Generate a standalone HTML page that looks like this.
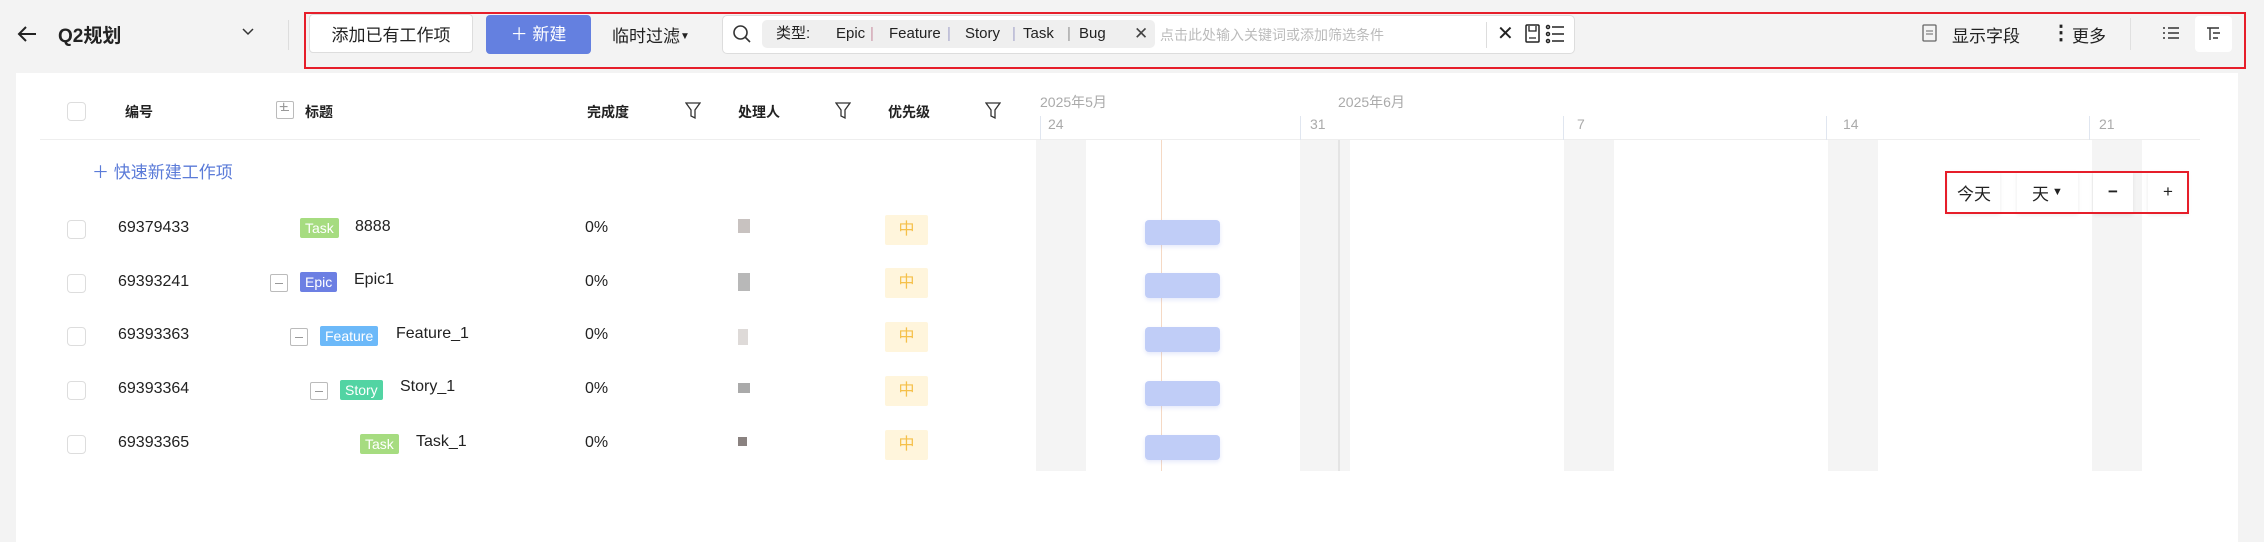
<!DOCTYPE html>
<html><head><meta charset="utf-8"><style>
*{box-sizing:border-box;margin:0;padding:0}
body{width:2264px;height:542px;background:#f3f3f3;font-family:"Liberation Sans","Noto Sans CJK SC",sans-serif;color:#222;position:relative;overflow:hidden;font-size:16px}
.a{position:absolute}
.red{position:absolute;border:2px solid #e61e2a}
.btn{position:absolute;background:#fff;border:1px solid #ddd;border-radius:4px;display:flex;align-items:center;justify-content:center}
.cb{position:absolute;width:19px;height:19px;border:1px solid #ddd;border-radius:4px;background:#fff}
.hd{position:absolute;top:102px;font-size:14px;font-weight:bold;color:#222}
.tag{position:absolute;height:20px;border-radius:2px;color:#fff;font-size:14px;line-height:20px;padding:0 5px}
.mb{position:absolute;width:18px;height:18px;border:1px solid #bbb;border-radius:2px;background:#fff}
.mb:after{content:"";position:absolute;left:4px;top:8px;width:8px;height:1px;background:#999}
.pr{position:absolute;left:885px;width:43px;height:30px;background:#fff5dc;color:#f5c04a;font-size:16px;line-height:30px;text-align:center;border-radius:2px}
.bar{position:absolute;left:1145px;width:75px;height:25px;background:#c0cdf7;border-radius:4px;box-shadow:0 2px 4px rgba(120,140,230,.2)}
.wk{position:absolute;top:140px;height:331px;background:#f4f4f4}
.tl{position:absolute;top:116px;height:24px;width:1px;background:#e0e6f0}
.dt{position:absolute;font-size:14px;color:#aaa}
.tb{position:absolute;top:171px;height:42px;background:#fff;box-shadow:0 2px 4px rgba(0,0,0,.08);display:flex;align-items:center;justify-content:center;font-size:17px}
</style></head><body>
<!-- header -->
<svg class="a" style="left:16px;top:24px" width="22" height="20" viewBox="0 0 22 20"><path d="M20 10H3M10 3L3 10l7 7" stroke="#222" stroke-width="2" fill="none"/></svg>
<div class="a" style="left:58px;top:21px;font-size:19px;font-weight:bold">Q2规划</div>
<svg class="a" style="left:242px;top:28px" width="12" height="8"><path d="M1 1l5 5 5-5" stroke="#333" stroke-width="1.5" fill="none"/></svg>
<div class="a" style="left:288px;top:20px;width:1px;height:30px;background:#ddd"></div>
<div class="btn" style="left:309px;top:14px;width:164px;height:39px;font-size:17px">添加已有工作项</div>
<div class="a" style="left:486px;top:15px;width:105px;height:39px;background:#6480e0;border-radius:4px;color:#fff;font-size:17px;line-height:39px;text-align:center">＋ 新建</div>
<div class="a" style="left:612px;top:22px;font-size:17px">临时过滤<span style="font-size:10px;vertical-align:3px">▼</span></div>
<div class="a" style="left:722px;top:15px;width:853px;height:39px;background:#fff;border:1px solid #ddd;border-radius:5px"></div>
<svg class="a" style="left:732px;top:24px" width="20" height="20"><circle cx="8.5" cy="8.5" r="6.5" stroke="#333" stroke-width="1.6" fill="none"/><path d="M13 13l5 5" stroke="#333" stroke-width="1.6"/></svg>
<div class="a" style="left:762px;top:20px;width:393px;height:28px;background:#efefef;border-radius:5px;font-size:15px;line-height:28px;white-space:nowrap">
<span class="a" style="left:14px">类型:</span><span class="a" style="left:74px">Epic</span><span class="a" style="left:108px;color:#c9a">|</span><span class="a" style="left:127px">Feature</span><span class="a" style="left:185px;color:#aac">|</span><span class="a" style="left:203px">Story</span><span class="a" style="left:250px;color:#aac">|</span><span class="a" style="left:261px">Task</span><span class="a" style="left:305px;color:#999">|</span><span class="a" style="left:317px">Bug</span><span class="a" style="left:372px;color:#444;font-size:17px">✕</span></div>
<div class="a" style="left:1160px;top:25px;font-size:14px;color:#bbb">点击此处输入关键词或添加筛选条件</div>
<div class="a" style="left:1486px;top:22px;width:1px;height:26px;background:#ddd"></div>
<div class="a" style="left:1497px;top:21px;font-size:20px;color:#222">✕</div>
<svg class="a" style="left:1525px;top:24px" width="16" height="20"><rect x="1" y="1" width="13" height="17" rx="1" stroke="#222" fill="none" stroke-width="1.5"/><path d="M4 2v5h7V2M4 14h7" stroke="#222" stroke-width="1.3" fill="none"/></svg>
<svg class="a" style="left:1545px;top:24px" width="20" height="20"><g stroke="#222" stroke-width="1.5" fill="none"><circle cx="3" cy="3" r="1.5"/><circle cx="3" cy="10" r="1.5"/><circle cx="3" cy="17" r="1.5"/><path d="M7 3h12M7 10h12M7 17h12"/></g></svg>
<svg class="a" style="left:1922px;top:24px" width="16" height="18"><rect x="1" y="1" width="13" height="16" rx="1" stroke="#666" fill="none" stroke-width="1.3"/><path d="M4 7h7M4 10h7" stroke="#666"/></svg>
<div class="a" style="left:1952px;top:22px;font-size:17px">显示字段</div>
<div class="a" style="left:2051px;top:20px;font-size:20px;font-weight:bold">⋮</div>
<div class="a" style="left:2072px;top:22px;font-size:17px">更多</div>
<div class="a" style="left:2130px;top:18px;width:1px;height:32px;background:#e0e0e0"></div>
<svg class="a" style="left:2163px;top:26px" width="16" height="14"><g stroke="#333" stroke-width="1.4"><path d="M0 2h2M0 7h2M0 12h2M5 2h11M5 7h11M5 12h11"/></g></svg>
<div class="a" style="left:2195px;top:16px;width:37px;height:36px;background:#fff;border-radius:4px"></div>
<svg class="a" style="left:2206px;top:26px" width="16" height="16"><g stroke="#333" stroke-width="1.4" fill="none"><path d="M1 2h12M4 2v12M7 7h7M7 12h5"/></g></svg>
<div class="red" style="left:304px;top:12px;width:1942px;height:57px"></div>
<!-- panel -->
<div class="a" style="left:16px;top:73px;width:2222px;height:469px;background:#fff"></div>
<div class="cb" style="left:67px;top:102px"></div>
<div class="hd" style="left:125px">编号</div>
<div class="mb" style="left:276px;top:101px"></div><div class="a" style="left:279px;top:99px;font-size:16px;color:#999">+</div>
<div class="hd" style="left:305px">标题</div>
<div class="hd" style="left:587px">完成度</div>
<div class="hd" style="left:738px">处理人</div>
<div class="hd" style="left:888px">优先级</div>
<svg class="a" style="left:685px;top:102px" width="16" height="18"><path d="M1 1h14l-5 7v8l-4-2V8z" stroke="#333" fill="none" stroke-width="1.3"/></svg>
<svg class="a" style="left:835px;top:102px" width="16" height="18"><path d="M1 1h14l-5 7v8l-4-2V8z" stroke="#333" fill="none" stroke-width="1.3"/></svg>
<svg class="a" style="left:985px;top:102px" width="16" height="18"><path d="M1 1h14l-5 7v8l-4-2V8z" stroke="#333" fill="none" stroke-width="1.3"/></svg>
<div class="a" style="left:40px;top:139px;width:2160px;height:1px;background:#eee"></div>
<!-- gantt -->
<div class="wk" style="left:1036px;width:50px"></div>
<div class="wk" style="left:1300px;width:50px"></div>
<div class="a" style="left:1338px;top:140px;width:2px;height:331px;background:#e4e4e4"></div>
<div class="wk" style="left:1564px;width:50px"></div>
<div class="wk" style="left:1828px;width:50px"></div>
<div class="wk" style="left:2092px;width:50px"></div>
<div class="a" style="left:1161px;top:140px;width:1px;height:331px;background:#f5d9c4"></div>
<div class="dt" style="left:1040px;top:92px">2025年5月</div>
<div class="dt" style="left:1338px;top:92px">2025年6月</div>
<div class="tl" style="left:1040px"></div><div class="dt" style="left:1048px;top:116px">24</div>
<div class="tl" style="left:1300px"></div><div class="dt" style="left:1310px;top:116px">31</div>
<div class="tl" style="left:1563px"></div><div class="dt" style="left:1577px;top:116px">7</div>
<div class="tl" style="left:1826px"></div><div class="dt" style="left:1843px;top:116px">14</div>
<div class="tl" style="left:2089px"></div><div class="dt" style="left:2099px;top:116px">21</div>
<div class="bar" style="top:220px"></div><div class="bar" style="top:273px"></div><div class="bar" style="top:327px"></div><div class="bar" style="top:381px"></div><div class="bar" style="top:435px"></div>
<div class="tb" style="left:1948px;width:52px">今天</div>
<div class="tb" style="left:2017px;width:61px">天<span style="font-size:11px;margin-left:3px">▼</span></div>
<div class="tb" style="left:2093px;width:40px;font-weight:bold">−</div>
<div class="tb" style="left:2148px;width:40px">+</div>
<div class="red" style="left:1945px;top:171px;width:244px;height:43px"></div>
<!-- rows -->
<div class="a" style="left:92px;top:158px;color:#5b7bd8;font-size:17px">＋ 快速新建工作项</div>
<div class="cb" style="left:67px;top:220px"></div><div class="a" style="left:118px;top:219px">69379433</div>
<div class="tag" style="left:300px;top:218px;background:#a6dc80">Task</div><div class="a" style="left:355px;top:218px">8888</div>
<div class="cb" style="left:67px;top:274px"></div><div class="a" style="left:118px;top:273px">69393241</div>
<div class="mb" style="left:270px;top:274px"></div><div class="tag" style="left:300px;top:272px;background:#6c7fe3">Epic</div><div class="a" style="left:354px;top:271px">Epic1</div>
<div class="cb" style="left:67px;top:327px"></div><div class="a" style="left:118px;top:326px">69393363</div>
<div class="mb" style="left:290px;top:328px"></div><div class="tag" style="left:320px;top:326px;background:#6cb9f9">Feature</div><div class="a" style="left:396px;top:325px">Feature_1</div>
<div class="cb" style="left:67px;top:381px"></div><div class="a" style="left:118px;top:380px">69393364</div>
<div class="mb" style="left:310px;top:382px"></div><div class="tag" style="left:340px;top:380px;background:#52d4a3">Story</div><div class="a" style="left:400px;top:378px">Story_1</div>
<div class="cb" style="left:67px;top:435px"></div><div class="a" style="left:118px;top:434px">69393365</div>
<div class="tag" style="left:360px;top:434px;background:#a6dc80">Task</div><div class="a" style="left:416px;top:433px">Task_1</div>
<div class="a" style="left:585px;top:219px">0%</div><div class="a" style="left:585px;top:273px">0%</div><div class="a" style="left:585px;top:326px">0%</div><div class="a" style="left:585px;top:380px">0%</div><div class="a" style="left:585px;top:434px">0%</div>
<div class="a" style="left:738px;top:219px;width:12px;height:14px;background:#c8c2c0"></div>
<div class="a" style="left:738px;top:273px;width:12px;height:18px;background:#b8b8b8"></div>
<div class="a" style="left:738px;top:329px;width:10px;height:16px;background:#dedad8"></div>
<div class="a" style="left:738px;top:383px;width:12px;height:10px;background:#aaa"></div>
<div class="a" style="left:738px;top:437px;width:9px;height:9px;background:#8a8280"></div>
<div class="pr" style="top:215px">中</div><div class="pr" style="top:268px">中</div><div class="pr" style="top:322px">中</div><div class="pr" style="top:376px">中</div><div class="pr" style="top:430px">中</div>
</body></html>
